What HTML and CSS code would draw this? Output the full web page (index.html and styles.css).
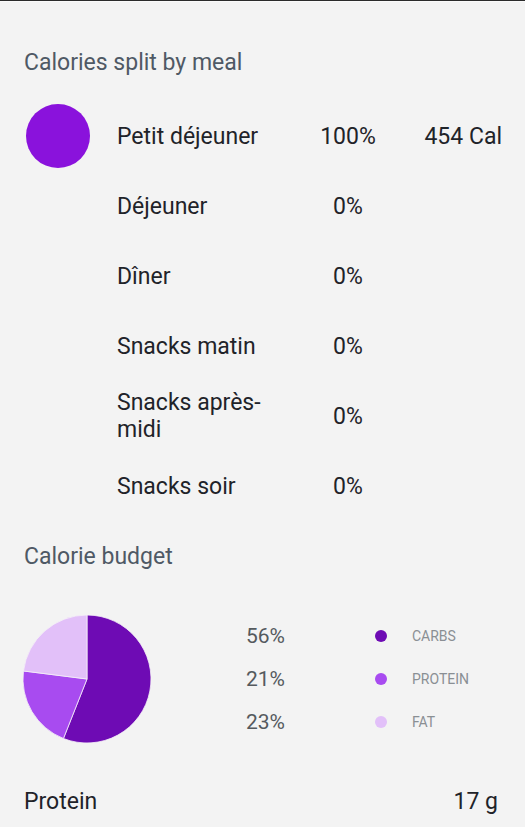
FILE: index.html
```html
<!DOCTYPE html>
<html lang="fr">
<head>
  <meta charset="UTF-8">
  <meta name="viewport" content="width=device-width, initial-scale=1.0">
  <title>Calories</title>
  <link rel="stylesheet" href="styles.css">
</head>
<body>

<div class="screen">
  <h2 class="section-title first">Calories split by meal</h2>

  <div class="meals">
    <div class="meal">
      <span class="meal-dot"></span>
      <span class="meal-name">Petit déjeuner</span>
      <span class="meal-pct">100%</span>
      <span class="meal-cal">454 Cal</span>
    </div>
    <div class="meal">
      <span></span>
      <span class="meal-name">Déjeuner</span>
      <span class="meal-pct">0%</span>
      <span></span>
    </div>
    <div class="meal">
      <span></span>
      <span class="meal-name">Dîner</span>
      <span class="meal-pct">0%</span>
      <span></span>
    </div>
    <div class="meal">
      <span></span>
      <span class="meal-name">Snacks matin</span>
      <span class="meal-pct">0%</span>
      <span></span>
    </div>
    <div class="meal">
      <span></span>
      <span class="meal-name">Snacks après-midi</span>
      <span class="meal-pct">0%</span>
      <span></span>
    </div>
    <div class="meal">
      <span></span>
      <span class="meal-name">Snacks soir</span>
      <span class="meal-pct">0%</span>
      <span></span>
    </div>
  </div>

  <h2 class="section-title">Calorie budget</h2>

  <div class="budget">
    <svg class="pie" width="128" height="128" viewBox="0 0 128 128">
      <path d="M64 64 L64 0 A64 64 0 1 1 40.44 123.51 Z" fill="#6e0bb4" stroke="#f5f0f8" stroke-width="0.8"/>
      <path d="M64 64 L40.44 123.51 A64 64 0 0 1 0.5 55.98 Z" fill="#a84bf0" stroke="#f5f0f8" stroke-width="0.8"/>
      <path d="M64 64 L0.5 55.98 A64 64 0 0 1 64 0 Z" fill="#e2c0f9" stroke="#f5f0f8" stroke-width="0.8"/>
    </svg>

    <div class="legend">
      <span class="legend-pct">56%</span>
      <span class="legend-dot carbs"></span>
      <span class="legend-label">Carbs</span>

      <span class="legend-pct">21%</span>
      <span class="legend-dot protein"></span>
      <span class="legend-label">Protein</span>

      <span class="legend-pct">23%</span>
      <span class="legend-dot fat"></span>
      <span class="legend-label">Fat</span>
    </div>
  </div>

  <div class="nutrient">
    <span>Protein</span>
    <span>17 g</span>
  </div>
</div>

</body>
</html>
```

FILE: styles.css
```css
html, body {
  margin: 0;
  height: 100%;
}

body {
  font-family: Roboto, "Noto Sans", sans-serif;
  background-color: #f3f3f3;
  color: #1f2329;
}

.screen {
  border-top: 1px solid #2b2b2b;
  box-shadow: inset 0 1px 0 #fafafa;
  padding: 0 23px 0 24px;
  height: 100%;
  box-sizing: border-box;
  overflow: hidden;
}

.section-title {
  margin: 24px 0 0;
  font-size: 23px;
  font-weight: 400;
  line-height: 24px;
  color: #4f5965;
}

.section-title.first {
  margin-top: 50px;
}

.meals {
  margin-top: 26px;
}

.meal {
  display: grid;
  grid-template-columns: 93px 160px 142px 1fr;
  align-items: center;
  min-height: 70px;
  font-size: 23px;
  line-height: 27px;
}

.meal-dot {
  width: 64px;
  height: 64px;
  margin-left: 2px;
  border-radius: 50%;
  background-color: #8a12dc;
}

.meal-pct {
  text-align: center;
}

.meal-cal {
  text-align: right;
  white-space: nowrap;
}

.budget {
  display: flex;
  align-items: center;
  margin-top: 45px;
}

.pie {
  display: block;
  margin-left: -1px;
}

.legend {
  display: grid;
  grid-template-columns: 104px 12px auto;
  grid-auto-rows: 43px;
  column-gap: 25px;
  align-items: center;
  margin-left: 95px;
}

.legend-pct {
  font-size: 21px;
  color: #555a5e;
}

.legend-dot {
  width: 12px;
  height: 12px;
  border-radius: 50%;
}

.legend-dot.carbs {
  background-color: #6e0bb4;
}

.legend-dot.protein {
  background-color: #a84bf0;
}

.legend-dot.fat {
  background-color: #e2c0f9;
}

.legend-label {
  font-size: 14px;
  text-transform: uppercase;
  color: #8a8f94;
}

.nutrient {
  display: flex;
  justify-content: space-between;
  margin-top: 47px;
  padding-right: 4px;
  font-size: 23px;
  line-height: 24px;
}
```
